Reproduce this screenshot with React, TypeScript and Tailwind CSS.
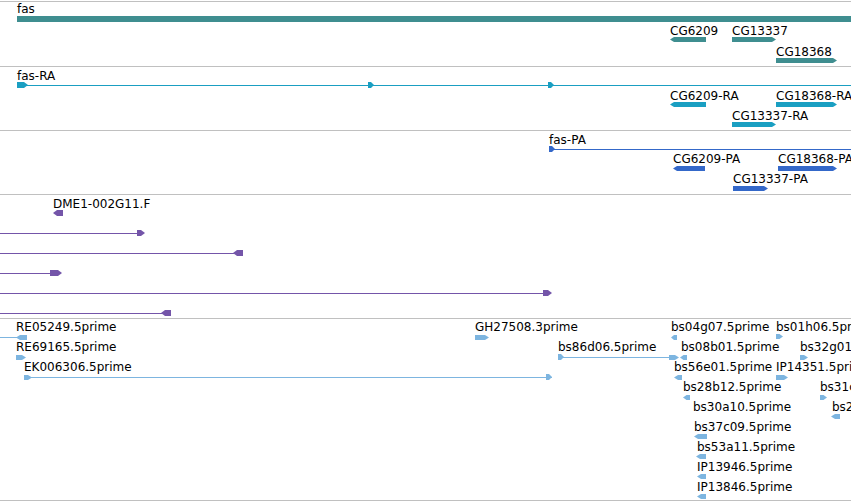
import React from 'react';

// glyphs: [kind, x1, x2, y, h]  kind: 'line' | 'bar' | 'r' | 'l'
type Glyph = [string, number, number, number, number?];
type Label = [string, number, number]; // text, x, baseline

interface TrackProps {
  top: number;
  hClass: string;
  color: string;
  labels: Label[];
  glyphs: Glyph[];
  height: number;
}

const shape = (g: Glyph, color: string, off: number, i: number) => {
  const [kind, x1, x2, yy, hh = 5] = g;
  const y = yy - off;
  if (kind === 'line') return <rect key={i} x={x1} y={y} width={x2 - x1} height={1} fill={color} />;
  if (kind === 'bar') return <rect key={i} x={x1} y={y} width={x2 - x1} height={hh} fill={color} />;
  const t = Math.min(4, (x2 - x1) / 2);
  const m = y + hh / 2;
  const pts =
    kind === 'r'
      ? `${x1},${y} ${x2 - t},${y} ${x2},${m} ${x2 - t},${y + hh} ${x1},${y + hh}`
      : `${x1 + t},${y} ${x2},${y} ${x2},${y + hh} ${x1 + t},${y + hh} ${x1},${m}`;
  return <polygon key={i} points={pts} fill={color} />;
};

const Track = ({ top, hClass, color, labels, glyphs, height }: TrackProps) => {
  const off = top + 1;
  return (
    <div className={`relative border-t border-[#c0c0c0] ${hClass}`}>
      <svg className="absolute left-0 top-0" width={851} height={height - 1}>
        {glyphs.map((g, i) => shape(g, color, off, i))}
      </svg>
      {labels.map(([text, x, b]) => (
        <span
          key={text + x}
          className="absolute whitespace-nowrap text-[12px] leading-[14px] text-black"
          style={{ left: x, top: b - 10 - off }}
        >
          {text}
        </span>
      ))}
    </div>
  );
};

const tracks: TrackProps[] = [
  {
    top: 1,
    height: 65,
    hClass: 'h-[65px]',
    color: '#3f8e90',
    labels: [
      ['fas', 17, 12],
      ['CG6209', 670, 34],
      ['CG13337', 732, 34],
      ['CG18368', 776, 55],
    ],
    glyphs: [
      ['bar', 17, 851, 16, 6],
      ['l', 670, 706, 37, 5],
      ['r', 732, 776, 37, 5],
      ['r', 776, 837, 58, 5],
    ],
  },
  {
    top: 66,
    height: 64,
    hClass: 'h-[64px]',
    color: '#1a9fc2',
    labels: [
      ['fas-RA', 17, 79],
      ['CG6209-RA', 670, 99],
      ['CG18368-RA', 776, 99],
      ['CG13337-RA', 732, 119],
    ],
    glyphs: [
      ['line', 17, 851, 85],
      ['r', 17, 28, 82, 6],
      ['r', 368, 374, 82, 6],
      ['r', 548, 554, 82, 6],
      ['l', 670, 706, 102, 5],
      ['r', 776, 837, 102, 5],
      ['r', 732, 776, 122, 5],
    ],
  },
  {
    top: 130,
    height: 64,
    hClass: 'h-[64px]',
    color: '#3468c9',
    labels: [
      ['fas-PA', 549, 143],
      ['CG6209-PA', 673, 162],
      ['CG18368-PA', 778, 162],
      ['CG13337-PA', 733, 182],
    ],
    glyphs: [
      ['line', 549, 851, 149],
      ['r', 549, 555, 146, 6],
      ['l', 673, 705, 166, 5],
      ['r', 778, 837, 166, 5],
      ['r', 733, 768, 186, 5],
    ],
  },
  {
    top: 194,
    height: 124,
    hClass: 'h-[124px]',
    color: '#7455a9',
    labels: [['DME1-002G11.F', 53, 207]],
    glyphs: [
      ['l', 53, 63, 210, 6],
      ['line', 0, 138, 233],
      ['r', 137, 145, 230, 6],
      ['line', 0, 234, 253],
      ['l', 233, 243, 250, 6],
      ['line', 0, 51, 273],
      ['r', 50, 62, 270, 6],
      ['line', 0, 544, 293],
      ['r', 543, 552, 290, 6],
      ['line', 0, 162, 313],
      ['l', 161, 171, 310, 6],
    ],
  },
  {
    top: 318,
    height: 183,
    hClass: 'h-[183px] border-b',
    color: '#7db5e0',
    labels: [
      ['RE05249.5prime', 16, 330],
      ['RE69165.5prime', 16, 350],
      ['EK006306.5prime', 24, 370],
      ['GH27508.3prime', 475, 330],
      ['bs86d06.5prime', 558, 350],
      ['bs04g07.5prime', 671, 330],
      ['bs01h06.5prime', 776, 330],
      ['bs08b01.5prime', 681, 350],
      ['bs32g01.5prime', 800, 350],
      ['bs56e01.5prime', 674, 370],
      ['IP14351.5prime', 776, 370],
      ['bs28b12.5prime', 683, 390],
      ['bs31c05.5prime', 820, 390],
      ['bs30a10.5prime', 693, 410],
      ['bs24f11.5prime', 832, 410],
      ['bs37c09.5prime', 694, 430],
      ['bs53a11.5prime', 697, 450],
      ['IP13946.5prime', 697, 470],
      ['IP13846.5prime', 697, 490],
    ],
    glyphs: [
      ['line', 0, 17, 337],
      ['l', 16, 27, 335, 5],
      ['r', 16, 26, 355, 5],
      ['line', 24, 552, 377],
      ['r', 24, 32, 375, 5],
      ['r', 546, 552, 374, 6],
      ['r', 475, 489, 335, 5],
      ['line', 558, 670, 357],
      ['r', 558, 564, 354, 6],
      ['r', 669, 679, 355, 5],
      ['l', 671, 677, 335, 5],
      ['r', 776, 783, 334, 5],
      ['l', 680, 687, 355, 5],
      ['r', 800, 808, 355, 5],
      ['l', 674, 682, 375, 5],
      ['r', 776, 788, 375, 5],
      ['l', 683, 690, 395, 5],
      ['r', 820, 827, 395, 5],
      ['l', 831, 840, 414, 5],
      ['l', 694, 707, 434, 5],
      ['l', 696, 706, 454, 5],
      ['l', 697, 706, 474, 5],
      ['l', 697, 706, 494, 5],
    ],
  },
];

export default function App() {
  return (
    <div
      className="relative w-[851px] h-[502px] overflow-hidden bg-white pt-px"
      style={{ fontFamily: '"DejaVu Sans", sans-serif' }}
    >
      {tracks.map((t) => (
        <Track key={t.top} {...t} />
      ))}
    </div>
  );
}
